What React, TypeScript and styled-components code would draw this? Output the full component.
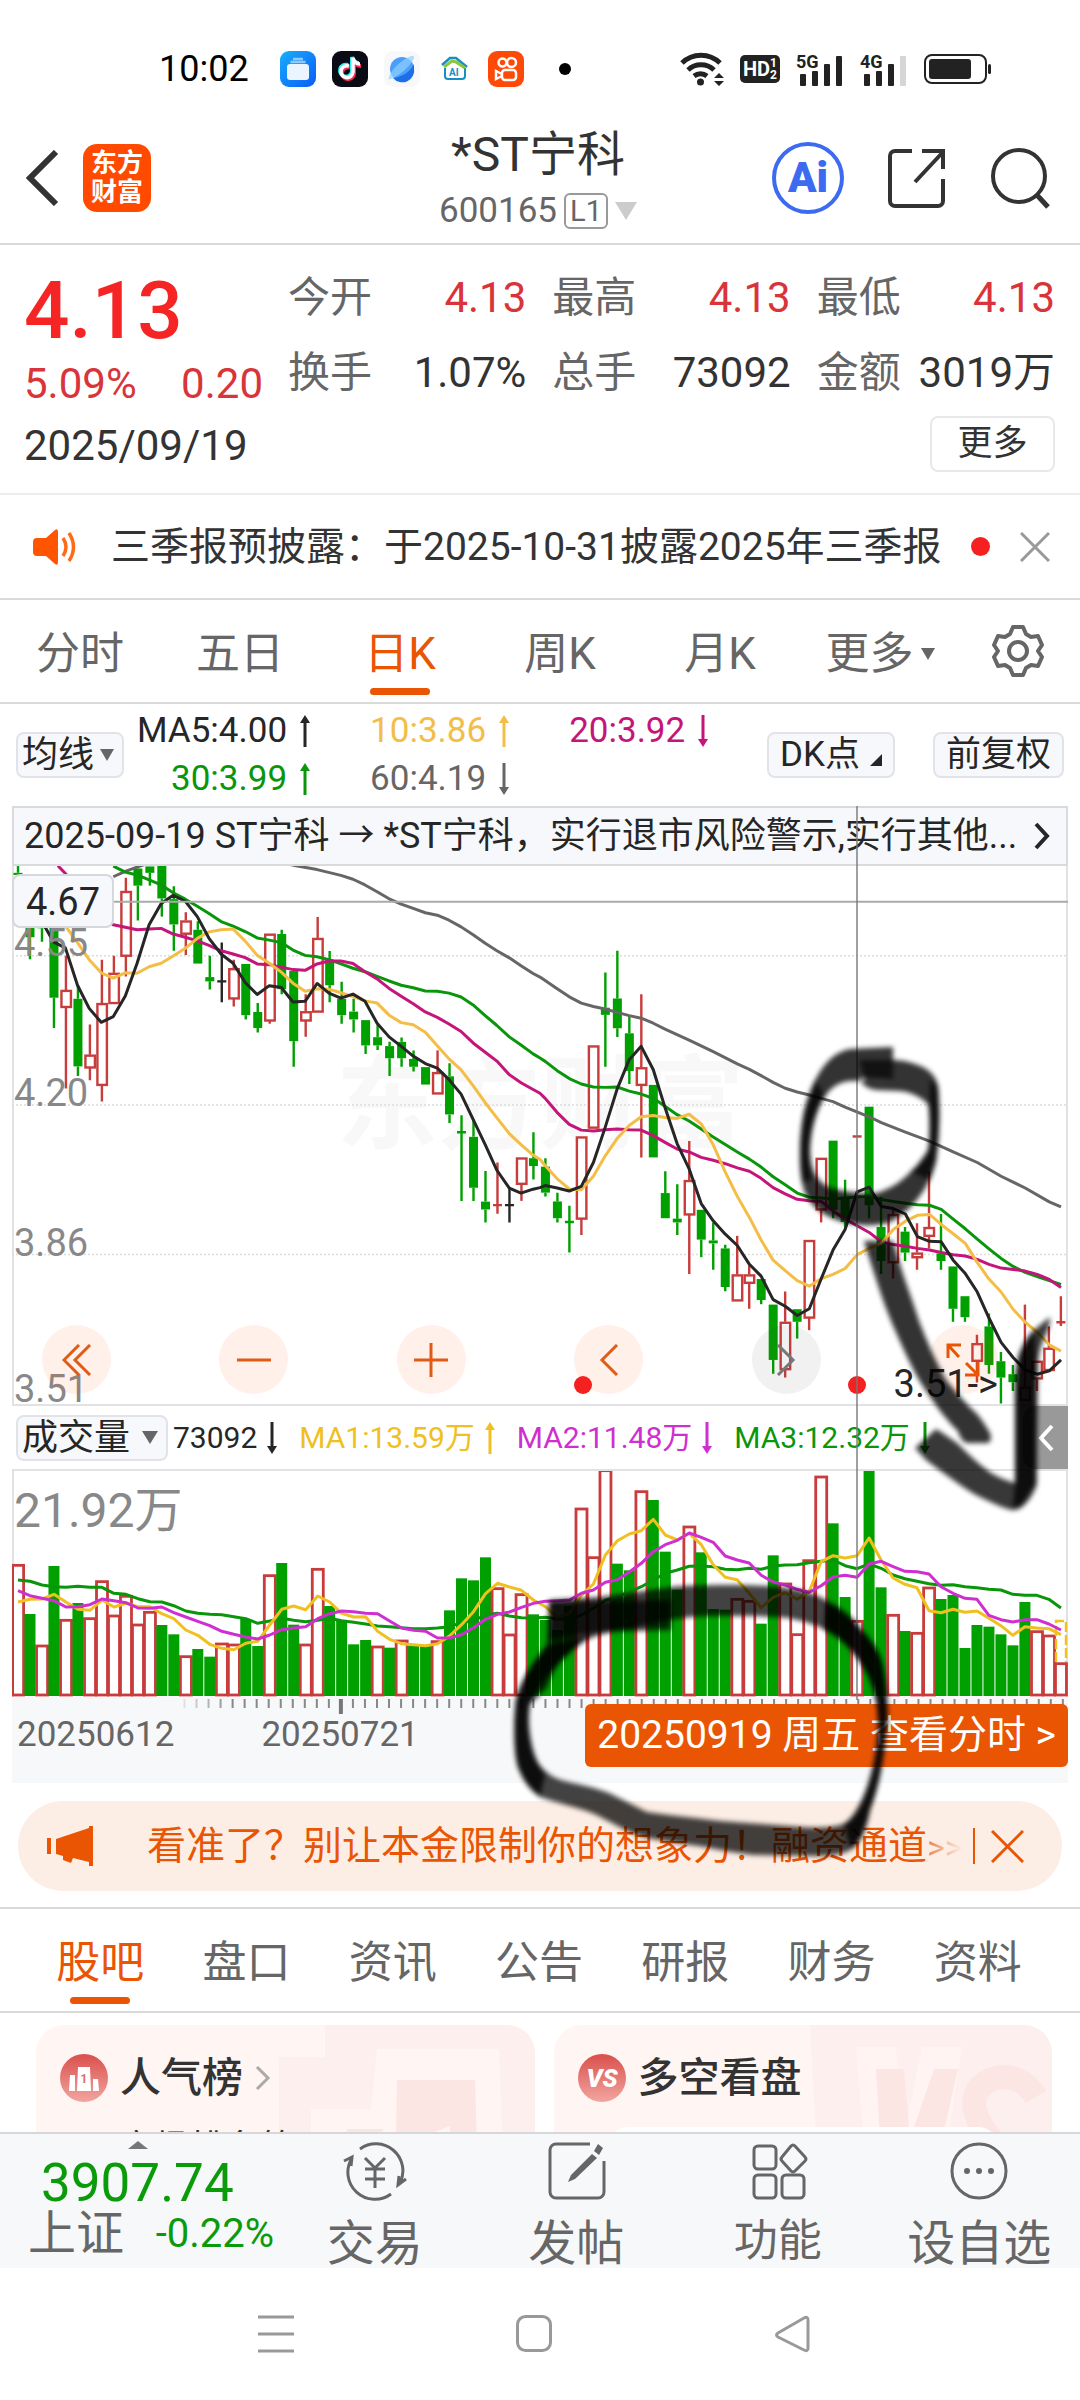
import React from "react";
import styled, { createGlobalStyle } from "styled-components";

const ORANGE = "#ea5504";
const GREEN = "#00a000";
const RED = "#c83c3c";

const GlobalStyle = createGlobalStyle`
  * { box-sizing: border-box; }
  body { margin: 0; background: #fff; }
  body, button, select {
    font-family: Roboto, "Noto Sans CJK SC", sans-serif;
    color: #333;
  }
  button, select {
    margin: 0; padding: 0; border: 0; background: none;
    font-weight: 400; cursor: pointer; appearance: none;
  }
  svg { display: block; flex: none; }
`;

/* ---------- chart data ---------- */

type Candle = { kind: string; top: number; bottom: number; high: number; low: number };
type Point = [number, number];

const STEP = 11.987;
const slotX = (i: number) => 6 + i * STEP;

const parseCandles = (text: string, scale: number): Candle[] =>
  text.trim().split(",").map((row) => {
    const [kind, ...n] = row.trim().split(" ");
    const [top, bottom, high, low] = n.map((v) => Number(v) / scale - 16);
    return { kind, top, bottom, high, low };
  });

const parseLine = (text: string, left: number, scale: number): Point[] =>
  text.trim().split(";").map((pair) => {
    const [x, y] = pair.split(",").map(Number);
    return [x / 2.904 + left, y / scale - 16];
  });

const CANDLES: Candle[] = [
  ...parseCandles(
    `g 64 70 44 100,g 200 245 120 307,g 150 220 120 258,g 200 415 190 500,r 393 441 297 670,
    g 418 608 380 635,r 575 611 490 647,r 430 660 308 707,r 345 430 297 430,r 115 297 78 355,
    g 52 100 46 198,g 46 64 46 100,g 44 136 44 187,g 138 209 102 283,r 198 235 175 295,
    g 224 319 200 319,g 357 369 297 392,k 369 369 260 428,r 332 417 308 440,g 320 464 320 476,
    g 455 500 430 513,r 235 479 235 488,g 236 391 224 405,g 340 537 340 609,r 453 479 405 525,
    r 247 454 188 454,g 308 380 284 428,g 418 464 370 488,g 454 476 418 513,g 478 549 478 573,
    g 526 549 490 562,g 551 585 539 635,g 539 585 527 609,g 587 609 563 622,g 610 659 610 659,
    r 624 684 563 684,g 636 743 599 767,g 793 793 745 986,g 806 949 757 986,g 988 1010 902 1047,
    r 998 998 878 1022,k 998 998 950 1047,r 864 938 864 986,g 866 888 793 926`,
    2.8
  ),
  ...parseCandles(
    `g 755 817 735 826,g 838 878 817 888,g 887 887 848 960,r 683 879 683 918,r 466 662 466 662,
    g 376 393 292 517,g 354 425 240 446,g 437 527 397 558,r 518 560 344 733,g 560 733 560 733,
    g 818 878 766 878,g 879 888 797 918,r 787 869 694 1011,g 858 929 858 971,g 931 938 888 1001,
    g 950 1042 941 1052,r 1012 1074 920 1074,r 1012 1032 990 1094,g 1023 1073 1023 1083,g 1084 1216 1084 1249,
    r 1125 1238 1053 1258,g 1095 1125 1095 1165,r 930 1115 930 1145,r 734 857 734 888,g 693 858 693 878,
    g 827 887 786 900,r 683 683 683 683,g 612 847 612 878,g 899 980 827 1011,r 868 983 858 1022,
    g 910 960 899 980,r 960 971 890 1001,r 899 920 766 950,g 962 980 868 1001,g 993 1094 993 1125,
    g 1064 1114 1064 1125,r 1176 1218 1156 1270,g 1136 1228 1105 1249,g 1219 1258 1197 1320,g 1250 1269 1228 1290,
    r 1280 1311 1084 1311,r 1218 1260 1218 1290,r 1187 1240 1136 1240,r 1126 1126 1064 1135`,
    2.376
  ),
];

const both = (a: string, b: string) => [...parseLine(a, -12, 2.8), ...parseLine(b, 528, 2.376)];

const PRICE_LINES: { color: string; points: Point[] }[] = [
  {
    color: "#666",
    points: both(
      "329,75;364,60;398,48;433,36;500,20;760,20;820,36;860,44;921,55;990,71;1025,82;1060,98;1095,117;1130,137;1165,152;1200,164;1235,176;1270,183;1304,197;1339,216;1374,238;1409,262;1443,283;1479,303;1513,325;1548,347",
      "0,303;50,331;85,350;120,365;155,373;189,379;224,387;259,395;294,401;329,413;363,427;433,453;503,481;573,510;608,523;642,538;677,554;712,568;747,577;782,584;817,592;851,600;886,613;956,636;991,650;1061,673;1131,694;1200,720;1270,745;1339,778;1409,806;1479,839;1513,851"
    ),
  },
  {
    color: "#0a960a",
    points: both(
      "329,45;364,62;398,70;433,84;468,98;503,120;538,138;573,158;607,178;642,201;677,214;712,229;747,247;782,253;817,260;851,281;886,296;921,300;955,308;990,320;1025,332;1060,342;1095,355;1130,368;1165,380;1200,387;1235,396;1270,397;1304,402;1339,413;1374,435;1409,465;1443,493;1479,525;1513,548;1548,573",
      "0,496;15,504;50,526;85,545;120,558;155,565;189,566;224,565;259,575;294,582;329,592;363,611;398,631;433,646;468,665;503,684;538,702;573,720;608,737;642,756;677,779;712,798;747,818;782,828;817,830;851,832;886,830;921,827;956,826;991,833;1026,838;1061,842;1096,846;1131,847;1165,857;1200,880;1235,903;1270,928;1304,951;1339,974;1374,993;1409,1007;1444,1017;1479,1027;1513,1036"
    ),
  },
  {
    color: "#c3157a",
    points: both(
      "168,44;192,68;225,120;260,170;294,196;329,210;364,217;398,224;433,222;468,220;503,236;538,245;573,255;607,268;642,283;677,292;712,302;747,320;782,322;817,329;851,336;886,338;921,320;955,312;990,312;1025,319;1060,342;1095,362;1130,389;1165,411;1200,432;1235,455;1270,470;1304,489;1339,510;1374,542;1409,568;1443,593;1479,631;1513,654;1548,673",
      "0,580;15,592;50,626;85,654;120,668;155,670;189,667;224,665;259,667;294,668;329,681;363,697;398,713;433,720;468,733;503,740;538,748;573,758;608,766;642,783;677,805;712,820;747,833;782,836;817,838;851,860;886,880;921,896;956,912;991,934;1026,941;1061,945;1096,950;1131,954;1165,960;1200,965;1235,968;1270,976;1304,988;1339,997;1374,1000;1409,1004;1444,1012;1479,1024;1513,1043"
    ),
  },
  {
    color: "#f4bd46",
    points: both(
      "160,170;195,220;225,260;259,308;294,345;329,360;364,345;398,346;433,328;468,318;503,298;538,276;573,248;607,230;642,224;677,222;712,256;747,296;782,318;817,343;851,374;886,397;921,390;955,391;990,401;1025,412;1060,424;1095,430;1130,464;1165,485;1200,491;1235,512;1270,550;1304,587;1339,618;1374,662;1409,710;1443,753;1479,797;1513,828;1548,857",
      "0,738;15,752;50,784;85,808;120,810;155,778;189,730;224,688;259,657;294,636;329,633;363,638;398,640;433,630;468,653;503,703;538,768;573,826;608,876;642,930;677,978;712,1003;747,1027;782,1040;817,1022;851,1012;886,998;921,965;956,950;991,938;1026,905;1061,885;1096,871;1131,869;1165,893;1200,915;1235,938;1270,984;1304,1023;1339,1054;1374,1095;1409,1126;1444,1150;1479,1180;1513,1195"
    ),
  },
  {
    color: "#262626",
    points: both(
      "100,170;130,215;155,258;190,275;225,380;259,445;294,484;329,468;364,410;398,318;433,210;468,150;503,127;538,144;573,187;607,248;642,292;677,318;712,372;747,406;782,381;817,386;851,427;886,425;921,375;955,402;990,416;1025,405;1060,425;1095,487;1130,525;1165,552;1200,579;1235,600;1270,613;1304,645;1339,686;1374,757;1409,828;1443,900;1479,950;1513,964;1548,953",
      "0,805;15,800;50,806;85,813;120,802;155,745;189,662;224,570;259,500;294,468;329,524;363,614;398,700;433,760;468,843;503,884;538,916;573,943;608,988;642,1016;677,1072;712,1088;747,1110;782,1094;817,1022;851,954;886,905;921,815;956,804;991,850;1026,855;1061,868;1096,922;1131,933;1165,934;1200,978;1235,1010;1270,1054;1304,1116;1339,1174;1374,1210;1409,1240;1444,1250;1479,1242;1513,1216"
    ),
  },
];

const VOLUMES =
  "r493 g642 r735 g498 r658 g609 r653 r542 r645 r586 r672 r634 g675 g703 r767 g747 g770 r729 r732 g657 g738 r524 g489 g674 r732 r505 g618 g660 g733 g720 r738 g743 r720 g737 g737 r722 g631 g535 g541 g472 r563 r702 r581 g643 g660 g690 g618 r324 r470 r209 g491 g511 r272 g300 g455 g569 r378 g457 g627 g629 r595 r601 g671 g466 r549 r701 r479 r228 g370 g591 r661 g208 g562 r643 g693 r697 r561 g597 g585 g744 g675 g680 g703 g736 g606 r692 r705 r788"
    .split(" ")
    .map((s) => ({ kind: s[0], top: Number(s.slice(1)) / 3 - 69 }));

const VOLUME_LINES = [
  {
    color: "#0a960a",
    values:
      "540 544 555 560 562 559 562 562 580 583 596 605 606 617 633 640 643 644 650 656 670 663 655 661 665 661 655 662 667 672 678 680 683 686 686 684 680 668 662 645 640 648 653 654 652 657 658 645 625 601 590 575 560 540 520 510 499 498 500 508 509 505 508 498 495 494 488 484 480 497 506 492 505 525 536 544 551 556 554 560 563 568 570 583 586 586 598 624",
  },
  {
    color: "#f0c020",
    values:
      "606 598 597 583 606 628 631 600 621 610 620 620 641 656 690 706 733 745 749 730 724 675 628 618 629 588 606 640 651 650 694 718 731 734 737 731 708 674 635 581 550 561 571 600 620 653 640 585 552 465 422 402 392 358 405 420 400 434 494 532 539 580 623 592 578 598 575 485 467 474 467 414 480 534 553 563 632 638 628 637 633 655 677 706 680 684 686 704",
  },
  {
    color: "#cf2fd0",
    values:
      "572 587 595 602 621 620 614 597 602 608 624 625 621 638 651 664 677 694 703 711 717 705 689 684 680 656 641 633 635 640 641 663 684 691 694 714 714 704 683 658 643 636 622 610 604 602 600 580 570 547 539 516 490 455 434 421 399 412 427 468 480 489 526 546 555 568 577 557 531 526 532 492 484 500 514 515 522 560 580 595 598 646 659 666 659 659 672 690",
  },
].map((l) => ({
  color: l.color,
  points: l.values.split(" ").map((v, i): Point => [slotX(i), Number(v) / 3 - 69]),
}));

const toPoints = (pts: Point[]) => pts.map(([x, y]) => `${x.toFixed(1)},${y.toFixed(1)}`).join(" ");

/* ---------- layout ---------- */

const Screen = styled.div`
  position: relative;
  display: flex;
  flex-direction: column;
  height: 100vh;
  min-height: 2340px;
  overflow: hidden;
  background: #fff;
`;

const StatusBar = styled.div`
  display: flex;
  align-items: center;
  height: 110px;
  padding: 28px 88px 0 159px;
  font-size: 36px;
  line-height: 40px;
  color: #000;
`;
const AppIcons = styled.div`
  display: flex;
  align-items: center;
  gap: 16px;
  margin-left: 31px;
`;
const SystemIcons = styled.div`
  display: flex;
  align-items: center;
  gap: 16px;
  margin-left: auto;
`;
const HdBadge = styled.span`
  display: flex;
  align-items: center;
  justify-content: center;
  width: 40px;
  height: 28px;
  border-radius: 5px;
  background: #222;
  color: #fff;
  font-size: 20px;
  font-weight: 700;
  line-height: 24px;
`;
const HdDigits = styled.span`
  display: grid;
  font-size: 12px;
  line-height: 12px;
`;

const Header = styled.header`
  display: grid;
  grid-template-columns: 1fr auto 1fr;
  align-items: center;
  height: 135px;
  padding: 2px 30px 0 26px;
  border-bottom: 2px solid #d9d9d9;
`;
const HeaderSide = styled.div<{ $end?: boolean }>`
  display: flex;
  align-items: center;
  gap: ${(p) => (p.$end ? 42 : 24)}px;
  justify-content: ${(p) => (p.$end ? "flex-end" : "flex-start")};
`;
const IconButton = styled.button`
  display: flex;
  align-items: center;
  justify-content: center;
`;
const GearButton = styled(IconButton)`
  margin-left: 31px;
`;
const BrandLogo = styled.a`
  display: grid;
  place-content: center;
  width: 68px;
  height: 68px;
  border-radius: 14px;
  background: #ff4a00;
  color: #fff;
  font-size: 26px;
  font-weight: 700;
  line-height: 29px;
  text-decoration: none;
`;
const AiButton = styled.button`
  width: 72px;
  height: 72px;
  border: 4px solid #3c6af0;
  border-radius: 50%;
  color: #3c6af0;
  font-size: 42px;
  font-weight: 900;
  line-height: 60px;
`;
const Title = styled.h1`
  margin: 0;
  font-size: 48px;
  font-weight: 400;
  line-height: 58px;
  text-align: center;
`;
const Code = styled.div`
  display: flex;
  align-items: center;
  gap: 7px;
  margin-top: 8px;
  font-size: 35px;
  line-height: 38px;
  color: #666;
`;
const Level = styled.span`
  padding: 0 4px;
  border: 2px solid #999;
  border-radius: 6px;
  font-size: 29px;
  line-height: 32px;
`;
const Caret = styled.span<{ $w?: number; $color?: string }>`
  width: 0;
  height: 0;
  border: ${(p) => (p.$w ?? 14) / 2}px solid transparent;
  border-top: ${(p) => ((p.$w ?? 14) * 6) / 7}px solid ${(p) => p.$color ?? "#666"};
  border-bottom: 0;
`;

const Quote = styled.section`
  padding: 26px 25px 21px 24px;
  border-bottom: 2px solid #ececec;
  font-size: 42px;
  line-height: 50px;
`;
const QuoteTop = styled.div`
  display: flex;
  gap: 25px;
`;
const PriceBlock = styled.div`
  width: 239px;
  color: #d9343a;
`;
const Price = styled.div`
  font-size: 80px;
  font-weight: 500;
  line-height: 80px;
  color: #f52525;
`;
const Change = styled.div`
  display: flex;
  justify-content: space-between;
  padding-top: 8px;
  line-height: 50px;
`;
const Stats = styled.dl`
  flex: 1;
  display: grid;
  grid-template-columns: repeat(3, 1fr);
  align-content: start;
  gap: 25px 26px;
  margin: 0;
  padding-top: 2px;
`;
const Stat = styled.div`
  display: flex;
  justify-content: space-between;
`;
const StatName = styled.dt`
  color: #666;
`;
const StatValue = styled.dd<{ $up?: boolean }>`
  margin: 0;
  color: ${(p) => (p.$up ? "#d9343a" : "#333")};
`;
const QuoteBottom = styled.div`
  display: flex;
  align-items: center;
  justify-content: space-between;
  margin-top: 7px;
`;
const QuoteDate = styled.span`
  padding-top: 3px;
`;
const MoreButton = styled.button`
  width: 125px;
  height: 56px;
  border: 2px solid #e8e8ea;
  border-radius: 8px;
  font-size: 35px;
  line-height: 50px;
`;

const News = styled.section`
  display: flex;
  align-items: center;
  height: 105px;
  padding: 0 30px 0 33px;
  border-bottom: 2px solid #d9d9d9;
`;
const NewsText = styled.a`
  flex: 1;
  margin-left: 33px;
  font-size: 39px;
  line-height: 50px;
  color: #333;
  text-decoration: none;
  white-space: nowrap;
`;
const Dot = styled.span`
  width: 19px;
  height: 19px;
  margin-right: 30px;
  border-radius: 50%;
  background: #f52020;
`;

const Tabs = styled.nav<{ $pad: string; $height: number }>`
  display: flex;
  flex: none;
  align-items: stretch;
  height: ${(p) => p.$height}px;
  padding: ${(p) => p.$pad};
  border-bottom: 2px solid #d9d9d9;
`;
const Tab = styled.button<{ $active?: boolean }>`
  position: relative;
  display: flex;
  flex: 1 1 0;
  align-items: center;
  justify-content: center;
  gap: 7px;
  padding-top: 5px;
  font-size: 44px;
  line-height: 60px;
  white-space: nowrap;
  color: ${(p) => (p.$active ? ORANGE : "#666")};
  &::after {
    content: "";
    position: absolute;
    bottom: 7px;
    width: 60px;
    height: 7px;
    border-radius: 4px;
    background: ${(p) => (p.$active ? ORANGE : "transparent")};
  }
`;

const MaBar = styled.section`
  display: flex;
  align-items: center;
  height: 102px;
  padding: 0 16px;
`;
const Picker = styled.label<{ $w: number }>`
  display: flex;
  flex: none;
  align-items: center;
  justify-content: space-between;
  width: ${(p) => p.$w}px;
  height: 46px;
  padding: 0 8px 0 4px;
  border: 2px solid #e1e3e8;
  border-radius: 8px;
  background: #f7f8fb;
`;
const PickerSelect = styled.select`
  font-size: 36px;
  line-height: 42px;
  height: 42px;
  color: #262626;
`;
const ChipButton = styled.button`
  height: 46px;
  padding: 0 11px;
  border: 2px solid #e1e3e8;
  border-radius: 8px;
  background: #f7f8fb;
  font-size: 35px;
  line-height: 40px;
  color: #262626;
`;
const Corner = styled.span`
  display: inline-block;
  margin-left: 10px;
  border-left: 12px solid transparent;
  border-bottom: 12px solid #262626;
`;
const Chips = styled.div`
  display: flex;
  gap: 38px;
  margin-left: auto;
`;
const MaGrid = styled.div`
  display: grid;
  grid-template-columns: repeat(3, auto);
  justify-items: end;
  column-gap: 60px;
  margin-left: 13px;
  font-size: 35px;
  line-height: 48px;
`;
const Reading = styled.span<{ $color: string; $gap?: number }>`
  display: flex;
  align-items: center;
  gap: ${(p) => p.$gap ?? 13}px;
  color: ${(p) => p.$color};
`;

const ChartArea = styled.section`
  position: relative;
  margin: 0 12px;
`;
const CrossLine = styled.div`
  position: absolute;
  top: 0;
  bottom: 83px;
  left: 80%;
  width: 2px;
  margin-left: -1px;
  background: rgba(120, 120, 120, 0.7);
`;
const EventRow = styled.a`
  display: flex;
  align-items: center;
  justify-content: space-between;
  height: 60px;
  padding: 0 16px 0 10px;
  border: 2px solid #d8dade;
  background: #f6f8fb;
  color: #262626;
  font-size: 36px;
  line-height: 50px;
  text-decoration: none;
  white-space: nowrap;
`;
const PricePane = styled.div`
  position: relative;
  height: 540px;
  border: solid #e2e2e4;
  border-width: 0 2px 2px;
`;
const Plot = styled.svg`
  position: absolute;
  top: 0;
  left: -2px;
  width: calc(100% + 4px);
  height: 100%;
`;
const Watermark = styled.div`
  position: absolute;
  inset: 180px 0 auto;
  text-align: center;
  font-size: 102px;
  font-weight: 700;
  line-height: 120px;
  color: #f8f8f8;
`;
const AxisLabel = styled.span<{ $y: number }>`
  position: absolute;
  left: 0;
  top: ${(p) => p.$y}px;
  font-size: 38px;
  line-height: 40px;
  color: #888;
`;
const CursorLabel = styled.span`
  position: absolute;
  left: -2px;
  top: 8px;
  width: 102px;
  height: 54px;
  border: 2px solid #d5d8dc;
  border-radius: 8px;
  background: #f6f8fb;
  font-size: 38px;
  line-height: 52px;
  text-align: center;
  color: #262626;
`;
const LowLabel = styled.span`
  position: absolute;
  right: 68px;
  bottom: 0;
  font-size: 38px;
  line-height: 40px;
  color: #262626;
`;
const PaneControls = styled.div`
  position: absolute;
  right: 68px;
  bottom: 10px;
  left: 28px;
  display: flex;
  justify-content: space-between;
`;
const RoundButton = styled.button<{ $muted?: boolean }>`
  display: flex;
  align-items: center;
  justify-content: center;
  width: 69px;
  height: 69px;
  border-radius: 50%;
  background: ${(p) => (p.$muted ? "rgba(80,80,80,.08)" : "rgba(250,90,20,.09)")};
`;
const Marker = styled.span<{ $x: number }>`
  position: absolute;
  left: ${(p) => p.$x}%;
  bottom: 10px;
  width: 18px;
  height: 18px;
  margin-left: -8px;
  border-radius: 50%;
  background: #f52020;
`;
const VolumeBar = styled.div`
  display: flex;
  align-items: center;
  height: 63px;
  padding-left: 4px;
  font-size: 30px;
  line-height: 40px;
  white-space: nowrap;
`;
const VolumeReadings = styled.div`
  display: flex;
  gap: 22px;
  margin-left: 5px;
`;
const DrawerButton = styled.button`
  display: flex;
  align-items: center;
  justify-content: center;
  width: 45px;
  height: 63px;
  margin-left: auto;
  border-radius: 12px 0 0 12px;
  background: #999;
`;
const VolumePane = styled.div`
  position: relative;
  height: 228px;
  border: solid #e2e2e4;
  border-width: 2px 2px 0;
`;
const VolumeMax = styled.span`
  position: absolute;
  left: 0;
  top: 13px;
  font-size: 48px;
  line-height: 54px;
  color: #888;
`;
const TimeAxis = styled.div`
  position: relative;
  height: 86px;
  background: #f7f8fa;
  font-size: 35px;
  line-height: 40px;
  color: #666;
`;
const Dates = styled.div`
  display: flex;
  gap: 87px;
  padding: 18px 5px;
`;
const DateButton = styled.button`
  position: absolute;
  top: 7px;
  right: 0;
  height: 63px;
  padding: 0 12px;
  border-radius: 6px;
  background: ${ORANGE};
  color: #fff;
  font-size: 39px;
  line-height: 63px;
  white-space: nowrap;
`;

const Promo = styled.aside`
  display: flex;
  flex: none;
  align-items: center;
  height: 90px;
  margin: 18px 18px 16px;
  padding: 0 38px 0 29px;
  border-radius: 45px;
  background: #fceee5;
  color: ${ORANGE};
  font-size: 39px;
  line-height: 50px;
  white-space: nowrap;
`;
const PromoText = styled.a`
  flex: 1;
  margin-left: 53px;
  color: inherit;
  text-decoration: none;
`;
const Fade = styled.span`
  font-size: 34px;
  background: linear-gradient(90deg, #e9854c, #fceee5);
  background-clip: text;
  color: transparent;
`;
const Divider = styled.span`
  width: 2px;
  height: 36px;
  margin-right: 16px;
  background: ${ORANGE};
`;

const Rule = styled.hr`
  flex: none;
  width: 100%;
  height: 2px;
  margin: 0;
  border: 0;
  background: #d9d9d9;
`;

const Cards = styled.section`
  display: grid;
  flex: 1 1 0;
  grid-template-columns: 1fr 1fr;
  gap: 19px;
  min-height: 0;
  padding: 12px 28px 0 36px;
  overflow: hidden;
`;
const Card = styled.article`
  position: relative;
  height: 220px;
  padding: 24px 24px;
  border-radius: 28px;
  background: #fff5f3;
  overflow: hidden;
`;
const CardArt = styled.svg`
  position: absolute;
  top: 0;
  right: 0;
`;
const CardHead = styled.h2`
  position: relative;
  display: flex;
  align-items: center;
  gap: 12px;
  margin: 0;
  font-size: 41px;
  font-weight: 500;
  line-height: 58px;
`;
const CardNote = styled.p`
  position: relative;
  margin: 17px 0 0 60px;
  font-size: 35px;
  line-height: 50px;
`;
const CardPanel = styled.div`
  position: relative;
  height: 80px;
  margin: 20px 30px 0;
  border: 5px solid #fff;
  border-radius: 20px;
`;

const BottomBar = styled.footer`
  display: flex;
  flex: none;
  height: 136px;
  border-top: 2px solid #d5d7da;
  background: #f6f8fa;
`;
const IndexBlock = styled.div`
  width: 274px;
  padding: 7px 0 0 28px;
  color: #0a9a0a;
`;
const UpTick = styled.span`
  display: block;
  width: 0;
  margin-left: 100px;
  border: 10px solid transparent;
  border-top: 0;
  border-bottom: 8px solid #777;
`;
const IndexValue = styled.div`
  padding: 7px 0 0 13px;
  font-size: 53px;
  line-height: 54px;
`;
const IndexRow = styled.div`
  display: flex;
  align-items: center;
  justify-content: space-between;
  font-size: 40px;
  line-height: 48px;
`;
const IndexName = styled.span`
  font-size: 48px;
  color: #666;
`;
const Actions = styled.div`
  display: flex;
  flex: 1;
`;
const Action = styled.button<{ $small?: boolean }>`
  display: flex;
  flex: 1;
  flex-direction: column;
  align-items: center;
  justify-content: flex-start;
  gap: 7px;
  padding-top: 7px;
  font-size: ${(p) => (p.$small ? 44 : 48)}px;
  line-height: ${(p) => (p.$small ? 66 : 72)}px;
  white-space: nowrap;
  color: #666;
`;
const SystemNav = styled.nav`
  display: flex;
  flex: none;
  align-items: center;
  justify-content: center;
  gap: 222px;
  height: 132px;
  padding-right: 12px;
`;

const InkLayer = styled.svg`
  position: absolute;
  top: 0;
  left: 0;
  pointer-events: none;
`;

/* ---------- small pieces ---------- */

const Arrow = ({ down }: { down?: boolean }) => (
  <svg width="10" height="32" viewBox="0 0 10 32" fill="currentColor">
    {down ? <path d="M3.500 0h3v24h3.500L5 32 0 24h3.500z" /> : <path d="M3.500 32h3V8h3.500L5 0 0 8h3.500z" />}
  </svg>
);

const Stroke = ({
  size, d, color, width = 4, box,
}: { size: [number, number]; d: string; color: string; width?: number; box?: string }) => (
  <svg width={size[0]} height={size[1]} viewBox={box ?? `0 0 ${size[0]} ${size[1]}`} fill="none" stroke={color} strokeWidth={width}>
    <path d={d} />
  </svg>
);

const Signal = ({ label, weak }: { label: string; weak?: boolean }) => (
  <svg width="48" height="40" viewBox="0 -4 48 40" fill="#222">
    <text x="0" y="15" fontSize="18" fontWeight="700">{label}</text>
    <rect x="4" y="21" width="6" height="12" rx="1" />
    <rect x="16" y="18" width="6" height="15" rx="1" />
    <rect x="28" y="11" width="6" height="22" rx="1" />
    <rect x="40" y="3" width="6" height="30" rx="1" fill={weak ? "#d6d6d6" : "#222"} />
  </svg>
);

const fill = (kind: string) => (kind === "g" ? GREEN : kind === "r" ? RED : "#262626");

const CandleShape = ({ c, i }: { c: Candle; i: number }) => {
  const x = slotX(i);
  const color = fill(c.kind);
  if (c.top === c.bottom)
    return (
      <g stroke={color} strokeWidth="2.4">
        <path d={`M${x} ${c.high}V${c.low}M${x - 4.5} ${c.top}h9`} />
      </g>
    );
  return (
    <g stroke={color} strokeWidth="2.4">
      <path d={`M${x} ${c.high}V${c.top}M${x} ${c.bottom}V${c.low}`} />
      {c.kind === "g" ? (
        <rect x={x - 4.5} y={c.top} width="9" height={c.bottom - c.top} fill={color} stroke="none" />
      ) : (
        <rect x={x - 4.5} y={c.top + 1} width="9.5" height={Math.max(1, c.bottom - c.top - 1)} fill="#fff" />
      )}
    </g>
  );
};

const PriceChart = () => (
  <Plot viewBox="0 0 1056 540" preserveAspectRatio="none">
    <g stroke="#dcdcdc" strokeWidth="1.5" strokeDasharray="2 2">
      <path d="M0 90H1056M0 240H1056M0 390H1056" />
    </g>
    {CANDLES.map((c, i) => <CandleShape key={i} c={c} i={i} />)}
    <g fill="none" strokeWidth="3" strokeLinejoin="round">
      {PRICE_LINES.map((l) => <polyline key={l.color} points={toPoints(l.points)} stroke={l.color} />)}
    </g>
    <path d="M0 36H1056" stroke="#aaa" strokeWidth="2" />
  </Plot>
);

const VolumeChart = () => (
  <Plot viewBox="0 2 1056 226" preserveAspectRatio="none">
    {VOLUMES.map((v, i) => {
      const x = slotX(i);
      return v.kind === "g" ? (
        <rect key={i} x={x - 5.5} y={v.top} width="11" height={227 - v.top} fill={GREEN} />
      ) : (
        <rect key={i} x={x - 5.4} y={v.top + 1} width="11" height={225 - v.top} fill="#fff" stroke={RED} strokeWidth="2.8" />
      );
    })}
    <path d="M1044 193V152H1054V193" fill="none" stroke="#f0c020" strokeWidth="2.4" strokeDasharray="10 3" />
    <g fill="none" strokeWidth="3" strokeLinejoin="round">
      {VOLUME_LINES.map((l) => <polyline key={l.color} points={toPoints(l.points)} stroke={l.color} />)}
    </g>
  </Plot>
);

const Ticks = () => (
  <Plot viewBox="0 0 1056 86" preserveAspectRatio="none" stroke="#888" strokeWidth="2">
    {Array.from({ length: 74 }, (_, k) => {
      const i = k + 14;
      return <path key={i} d={`M${slotX(i)} 2v9`} opacity={Math.min(1, 0.2 + k * 0.2)} />;
    })}
    <path d={`M${slotX(27)} 2v15`} strokeWidth="4" stroke="#777" />
  </Plot>
);

const Ink = () => (
  <InkLayer width="1080" height="2400" viewBox="0 0 1080 2400" aria-hidden="true">
    <defs>
      <filter id="soft" x="-10%" y="-10%" width="120%" height="120%">
        <feGaussianBlur stdDeviation="2.5" />
      </filter>
    </defs>
    <g filter="url(#soft)" fill="#000">
      <path
        fillRule="evenodd"
        fillOpacity=".8"
        d="M893 1047C878 1048 864 1048 850 1049C826 1053 811 1082 804 1112C799 1136 799 1164 802 1182C806 1206 825 1217 843 1222C858 1226 876 1226 888 1223C914 1210 930 1186 936 1161C940 1132 940 1108 938 1086C936 1074 926 1067 912 1063C906 1061 899 1060 893 1060Z
           M891 1080L850 1081C838 1082 830 1088 824 1098C814 1114 809 1134 810 1153C811 1172 818 1182 829 1187C842 1192 862 1194 877 1193C892 1188 904 1180 912 1170C920 1164 926 1158 928 1149C931 1132 930 1118 928 1104C920 1096 910 1092 900 1091L876 1090C866 1088 861 1084 860 1078Z"
      />
      <path fillOpacity=".65" d="M859 1060L893 1060V1079L866 1082Z" />
      <path fillOpacity=".7" d="M936 1161C940 1132 940 1108 938 1086L930 1080L929 1149L912 1172L930 1180Z" />
      <path fillOpacity=".7" d="M804 1112C799 1136 799 1164 802 1182L812 1180C808 1160 808 1130 824 1095L815 1080Z" />
      <path
        fillRule="evenodd"
        fillOpacity=".74"
        d="M549 1600L600 1597L671 1587C690 1585 745 1584 781 1587C800 1589 815 1594 826 1600C842 1608 852 1616 860 1627C872 1640 879 1650 883 1665C888 1690 889 1720 886 1735C883 1765 878 1790 870 1810C866 1830 860 1845 850 1850C842 1855 828 1856 815 1856L753 1855C736 1853 720 1850 705 1847C684 1844 662 1841 643 1837C626 1832 608 1820 592 1813C574 1806 556 1803 540 1797C524 1786 517 1770 515 1750C514 1732 514 1716 516 1700C520 1684 528 1668 547 1645Z
           M547 1688C552 1672 560 1661 568 1654C578 1643 590 1636 616 1631L671 1620C690 1616 708 1616 726 1616C750 1616 770 1616 788 1618C804 1621 816 1625 826 1630C840 1638 846 1644 852 1652C864 1664 872 1680 876 1700C880 1720 878 1740 876 1760C872 1778 868 1790 864 1800C858 1814 852 1821 843 1824C832 1828 814 1828 802 1827L747 1823C728 1822 712 1820 695 1818C676 1816 660 1814 647 1812C634 1806 622 1799 609 1793C594 1787 576 1784 561 1780C548 1776 538 1766 532 1752C528 1738 526 1718 530 1704Z"
      />
      <path fillOpacity=".75" d="M549 1602L671 1600V1630L600 1632L549 1640Z" />
      <path fillOpacity=".8" d="M826 1602C842 1608 866 1634 879 1653C888 1680 889 1720 886 1735C883 1765 878 1790 870 1810C866 1830 860 1845 850 1848L844 1824C862 1812 874 1770 877 1740C880 1710 876 1680 852 1652C844 1642 834 1634 824 1630Z" />
      <path fillOpacity=".8" d="M547 1645C528 1668 520 1684 516 1700C514 1716 513 1750 518 1768C524 1780 530 1790 540 1796L545 1774C534 1762 526 1730 530 1704C540 1680 560 1660 590 1636Z" />
      <path
        fillOpacity=".8"
        d="M864 1241C868 1254 872 1267 876 1279C882 1298 888 1314 895 1330C903 1348 910 1364 919 1380C932 1400 944 1418 958 1431C960 1438 963 1442 967 1443H988C992 1440 991 1438 990 1433C986 1426 982 1420 977 1414C966 1404 956 1392 946 1380C936 1362 927 1342 919 1321C913 1302 907 1286 902 1271L893 1241Z"
      />
      <path
        fillOpacity=".78"
        d="M915 1448L936 1429C944 1434 950 1438 957 1443C968 1454 980 1465 991 1473C1000 1478 1008 1481 1015 1483V1397C1015 1380 1016 1366 1019 1355C1023 1344 1028 1336 1034 1330L1050 1317C1050 1324 1048 1330 1046 1334C1041 1344 1039 1352 1038 1363L1037 1439V1484C1034 1494 1028 1502 1022 1507C1018 1510 1015 1510 1011 1510C998 1506 986 1500 974 1494C958 1484 942 1472 926 1460Z"
      />
      <path fillOpacity=".75" d="M1015 1483V1397C1015 1380 1016 1366 1019 1355C1023 1344 1028 1336 1034 1330L1036 1360L1035 1484L1022 1505L1013 1508Z" />
    </g>
  </InkLayer>
);

const STATS: [string, string, boolean][] = [
  ["今开", "4.13", true], ["最高", "4.13", true], ["最低", "4.13", true],
  ["换手", "1.07%", false], ["总手", "73092", false], ["金额", "3019万", false],
];
const PERIODS = ["分时", "五日", "日K", "周K", "月K"];
const SECTIONS = ["股吧", "盘口", "资讯", "公告", "研报", "财务", "资料"];

export default function App() {
  return (
    <>
      <GlobalStyle />
      <Screen>
        <StatusBar>
          <span>10:02</span>
          <AppIcons>
            <svg width="36" height="36" viewBox="0 0 36 36">
              <defs>
                <linearGradient id="blue" x2="1" y2="1"><stop stopColor="#18aefc" /><stop offset="1" stopColor="#0a5cf5" /></linearGradient>
              </defs>
              <rect width="36" height="36" rx="9" fill="url(#blue)" />
              <path d="M13 8h10M10.500 11h15" stroke="#8fc9ff" strokeWidth="2.500" />
              <rect x="7" y="13" width="22" height="16" rx="3" fill="#eaf5ff" />
            </svg>
            <svg width="36" height="36" viewBox="0 0 36 36" fill="none" strokeWidth="4">
              <rect width="36" height="36" rx="9" fill="#0b0b16" />
              <path d="M18 15.500a6 6 0 1 0 4 6V8c1 4 4 6 7 6" stroke="#fe2c55" transform="translate(0 1)" />
              <path d="M16 14a6 6 0 1 0 4 6V6c1 4 4 6 7 6" stroke="#25f4ee" />
              <path d="M17 15a6 6 0 1 0 4 6V7c1 4 4 6 7 6" stroke="#fff" strokeWidth="3.500" />
            </svg>
            <svg width="36" height="36" viewBox="0 0 36 36">
              <rect width="36" height="36" rx="9" fill="#f7f8fa" />
              <circle cx="18" cy="18" r="12" fill="#4a9ffb" />
              <path d="M30 17A12 12 0 0 1 9 27C18 26 26 21 30 13Z" fill="#1d6ee8" />
              <path d="M6 28C3 31 5 20 17 11S32 5 29 9C25 17 12 27 6 28Z" fill="#8fd0ff" opacity=".7" />
            </svg>
            <svg width="36" height="36" viewBox="0 0 36 36" fill="none" strokeWidth="2">
              <path d="M9 17v8a3 3 0 0 0 3 3h14a3 3 0 0 0 3-3v-8" stroke="#178fc4" />
              <path d="M6 14l8-7h6l11 9" stroke="#178fc4" strokeWidth="2.500" />
              <path d="M8 16l8-6 4 1 9 6" stroke="#8cc63f" strokeWidth="3" />
              <text x="13" y="25" fontSize="10" fontWeight="700" fill="#178fc4">AI</text>
            </svg>
            <svg width="36" height="36" viewBox="0 0 36 36" fill="none" stroke="#fff" strokeWidth="2.500">
              <rect width="36" height="36" rx="9" fill="#ff4906" stroke="none" />
              <circle cx="14.500" cy="11.500" r="4" /><circle cx="23.500" cy="11.500" r="4.500" />
              <rect x="14" y="19" width="14" height="10" rx="3" />
              <path d="M14 23l-6-3v8l6-3" />
            </svg>
          </AppIcons>
          <svg width="52" height="12" viewBox="0 0 52 12"><circle cx="41" cy="6" r="6" /></svg>
          <SystemIcons>
            <svg width="44" height="34" viewBox="0 0 44 34" fill="none" stroke="#222" strokeWidth="5">
              <path d="M2 11a27 27 0 0 1 38 0M8 18a19 19 0 0 1 26 0M14 24a11 11 0 0 1 13 0" />
              <circle cx="20.500" cy="30" r="3.500" fill="#222" stroke="none" />
              <path d="M34 26l5-5 5 5zM34 29l5 5 5-5z" fill="#222" stroke="none" />
            </svg>
            <HdBadge>HD<HdDigits><span>1</span><span>2</span></HdDigits></HdBadge>
            <Signal label="5G" />
            <Signal label="4G" weak />
            <svg width="68" height="30" viewBox="0 0 68 30">
              <rect x="1" y="1" width="61" height="28" rx="7" fill="none" stroke="#222" strokeWidth="2" />
              <rect x="5" y="5" width="42" height="20" rx="3" fill="#222" />
              <rect x="64" y="10" width="3" height="10" rx="1.500" fill="#222" />
            </svg>
          </SystemIcons>
        </StatusBar>

        <Header>
          <HeaderSide>
            <IconButton aria-label="返回">
              <Stroke size={[33, 56]} d="M30 2L4 28 30 54" color="#333" width={6} />
            </IconButton>
            <BrandLogo href="#home"><span>东方</span><span>财富</span></BrandLogo>
          </HeaderSide>
          <div>
            <Title>*ST宁科</Title>
            <Code>600165<Level>L1</Level><Caret $w={22} $color="#ccc" /></Code>
          </div>
          <HeaderSide $end>
            <AiButton>Ai</AiButton>
            <IconButton aria-label="分享">
              <Stroke size={[60, 62]} d="M26 4H9a5 5 0 0 0-5 5v45a5 5 0 0 0 5 5h43a5 5 0 0 0 5-5V32M29 35L57 5M36 4H57V22" color="#333" />
            </IconButton>
            <IconButton aria-label="搜索">
              <svg width="62" height="62" viewBox="0 0 62 62" fill="none" stroke="#333" strokeWidth="4">
                <circle cx="31" cy="29" r="26" /><path d="M48 47l12 13" strokeWidth="5" />
              </svg>
            </IconButton>
          </HeaderSide>
        </Header>

        <Quote>
          <QuoteTop>
            <PriceBlock>
              <Price>4.13</Price>
              <Change><span>5.09%</span><span>0.20</span></Change>
            </PriceBlock>
            <Stats>
              {STATS.map(([name, value, up]) => (
                <Stat key={name}><StatName>{name}</StatName><StatValue $up={up}>{value}</StatValue></Stat>
              ))}
            </Stats>
          </QuoteTop>
          <QuoteBottom>
            <QuoteDate>2025/09/19</QuoteDate>
            <MoreButton>更多</MoreButton>
          </QuoteBottom>
        </Quote>

        <News>
          <svg width="45" height="36" viewBox="0 0 45 36" fill="#ff5500">
            <path d="M4 9h9L22 1q3-2 3 2v30q0 4-3 2l-9-8H4q-4 0-4-4V13q0-4 4-4z" />
            <path d="M30 9q6 9 0 18M36 4q9 14 0 28" fill="none" stroke="#ff6a1a" strokeWidth="3.500" />
          </svg>
          <NewsText href="#news">三季报预披露：于2025-10-31披露2025年三季报</NewsText>
          <Dot />
          <IconButton aria-label="关闭">
            <Stroke size={[30, 30]} d="M1 1l28 28M29 1L1 29" color="#999" width={3} />
          </IconButton>
        </News>

        <Tabs $pad="0 35px 0 0" $height={104}>
          {PERIODS.map((p) => <Tab key={p} $active={p === "日K"}>{p}</Tab>)}
          <Tab>更多<Caret /></Tab>
          <GearButton aria-label="设置">
            <svg width="54" height="54" viewBox="0 0 54 54" fill="none" stroke="#666" strokeWidth="4" strokeLinejoin="round">
              <path d="M22 3h10l3 7 5 3 7-1 4 9-4 6 4 6-4 9-7-1-5 3-3 7H22l-3-7-5-3-7 1-4-9 4-6-4-6 4-9 7 1 5-3z" />
              <circle cx="27" cy="27" r="9" />
            </svg>
          </GearButton>
        </Tabs>

        <MaBar>
          <Picker $w={108}>
            <PickerSelect aria-label="指标"><option>均线</option></PickerSelect>
            <Caret />
          </Picker>
          <MaGrid>
            <Reading $color="#262626">MA5:4.00<Arrow /></Reading>
            <Reading $color="#f4bd46">10:3.86<Arrow /></Reading>
            <Reading $color="#c3157a">20:3.92<Arrow down /></Reading>
            <Reading $color="#0a960a">30:3.99<Arrow /></Reading>
            <Reading $color="#666">60:4.19<Arrow down /></Reading>
          </MaGrid>
          <Chips>
            <ChipButton>DK点<Corner /></ChipButton>
            <ChipButton>前复权</ChipButton>
          </Chips>
        </MaBar>

        <ChartArea>
          <EventRow href="#event">
            <span>2025-09-19 ST宁科 → *ST宁科，实行退市风险警示,实行其他...</span>
            <Stroke size={[16, 28]} d="M2 2l11 12L2 26" color="#262626" />
          </EventRow>
          <PricePane>
            <Watermark>东方财富</Watermark>
            <PriceChart />
            <AxisLabel $y={57}>4.55</AxisLabel>
            <AxisLabel $y={207}>4.20</AxisLabel>
            <AxisLabel $y={357}>3.86</AxisLabel>
            <AxisLabel $y={503}>3.51</AxisLabel>
            <CursorLabel>4.67</CursorLabel>
            <PaneControls>
              <RoundButton aria-label="最早">
                <Stroke size={[30, 32]} d="M17 1L2 16 17 31M28 1L13 16 28 31" color="#dd5d17" width={3} />
              </RoundButton>
              <RoundButton aria-label="缩小"><Stroke size={[34, 34]} d="M0 17H34" color="#dd5d17" width={3} /></RoundButton>
              <RoundButton aria-label="放大"><Stroke size={[34, 34]} d="M0 17H34M17 0V34" color="#dd5d17" width={3} /></RoundButton>
              <RoundButton aria-label="前移"><Stroke size={[20, 32]} d="M18 1L3 16 18 31" color="#dd5d17" width={3} /></RoundButton>
              <RoundButton aria-label="后移" $muted><Stroke size={[20, 32]} d="M2 1L17 16 2 31" color="#777" width={3} /></RoundButton>
              <RoundButton aria-label="全屏">
                <Stroke size={[34, 34]} d="M2 15V2H15M2 2L13 14M32 19V32H19M32 32L20 20" color="#ea5504" width={3} />
              </RoundButton>
            </PaneControls>
            <Marker $x={54} />
            <Marker $x={80} />
            <LowLabel>3.51-&gt;</LowLabel>
          </PricePane>
          <VolumeBar>
            <Picker $w={152}>
              <PickerSelect aria-label="副图"><option>成交量</option></PickerSelect>
              <Caret $w={16} />
            </Picker>
            <VolumeReadings>
              <Reading $gap={10} $color="#262626">73092<Arrow down /></Reading>
              <Reading $gap={10} $color="#f0c020">MA1:13.59万<Arrow /></Reading>
              <Reading $gap={10} $color="#cf2fd0">MA2:11.48万<Arrow down /></Reading>
              <Reading $gap={10} $color="#0a960a">MA3:12.32万<Arrow down /></Reading>
            </VolumeReadings>
            <DrawerButton aria-label="展开"><Stroke size={[16, 28]} d="M14 2L3 14 14 26" color="#fff" /></DrawerButton>
          </VolumeBar>
          <VolumePane>
            <VolumeChart />
            <VolumeMax>21.92万</VolumeMax>
          </VolumePane>
          <TimeAxis>
            <Ticks />
            <Dates><span>20250612</span><span>20250721</span></Dates>
            <DateButton>20250919 周五 查看分时 &gt;</DateButton>
          </TimeAxis>
          <CrossLine />
        </ChartArea>

        <Promo>
          <svg width="47" height="40" viewBox="0 0 47 40" fill={ORANGE}>
            <path d="M0 12h4v16H0zM9 13L42 2V0h4v40h-4v-4l-16-4-2 5-8-3v-4l-7-2z" />
          </svg>
          <PromoText href="#promo">看准了？别让本金限制你的想象力！融资通道<Fade>&gt;&gt;</Fade></PromoText>
          <Divider />
          <IconButton aria-label="关闭广告">
            <Stroke size={[33, 33]} d="M1 1l31 31M32 1L1 32" color={ORANGE} width={3} />
          </IconButton>
        </Promo>

        <Rule />
        <Tabs $pad="0 29px 0 27px" $height={104}>
          {SECTIONS.map((s) => <Tab key={s} $active={s === "股吧"}>{s}</Tab>)}
        </Tabs>

        <Cards>
          <Card>
            <CardArt width="256" height="220" viewBox="0 0 256 220">
              <path d="M46 0h210v220H0V32h46z" fill="#fdefed" />
              <path d="M98 24h122l8 196H32V84h60z" fill="#fff5f3" />
              <path d="M118 55h78l5 165h-86zM68 104h36v120H68z" fill="#fbe6e4" />
              <path d="M135 115l36-14v119h-20v-92l-18 3z" fill="#fff5f3" />
            </CardArt>
            <CardHead>
              <svg width="48" height="48" viewBox="0 0 48 48">
                <defs>
                  <linearGradient id="rose" x2="0" y2="1"><stop stopColor="#d9504c" /><stop offset="1" stopColor="#f2a5a0" /></linearGradient>
                </defs>
                <circle cx="24" cy="24" r="24" fill="url(#rose)" />
                <path d="M10 21h5v16H9zM18 13h12l1 24H17zM33 25h5l1 12h-6z" fill="#fff" />
                <text x="20.500" y="29" fontSize="12" fontWeight="700" fill="#df6a66">1</text>
              </svg>
              人气榜
              <Stroke size={[16, 26]} d="M2 2l11 11L2 24" color="#aaa" width={3} />
            </CardHead>
            <CardNote>市场排名第</CardNote>
          </Card>
          <Card>
            <CardArt width="242" height="220" viewBox="0 0 242 220">
              <path d="M0 0h242v220H12z" fill="#fdefed" />
              <path d="M46 22h40l8 90 18-90h40l-30 198H62z" fill="#fff5f3" opacity=".8" />
              <path d="M66 44h28l6 70 24-70h24l-40 176H76z" fill="#fbe6e4" />
              <path d="M226 72q-16-26-44-18-26 12-14 40 6 14 24 30 10 14-4 30" fill="none" stroke="#fbe6e4" strokeWidth="24" />
            </CardArt>
            <CardHead>
              <svg width="48" height="48" viewBox="0 0 48 48">
                <circle cx="24" cy="24" r="24" fill="url(#rose)" />
                <text x="24" y="33" fontSize="25" fontWeight="900" fontStyle="italic" fill="#fff" textAnchor="middle">VS</text>
              </svg>
              多空看盘
            </CardHead>
            <CardPanel />
          </Card>
        </Cards>

        <BottomBar>
          <IndexBlock>
            <UpTick />
            <IndexValue>3907.74</IndexValue>
            <IndexRow><IndexName>上证</IndexName><span>-0.22%</span></IndexRow>
          </IndexBlock>
          <Actions>
            <Action>
              <svg width="66" height="60" viewBox="0 0 66 60" fill="none" stroke="#666" strokeWidth="3">
                <path d="M18 8A27 27 0 0 1 58 42M64 38l-8 6 1-9M49 53A27 27 0 0 1 10 17M2 20l8-4-1 9" />
                <path d="M23 17l10 10 10-10M23 28h20M23 38h20M33 27v20" />
              </svg>
              交易
            </Action>
            <Action>
              <svg width="60" height="60" viewBox="0 0 60 60" fill="none" stroke="#666" strokeWidth="3">
                <path d="M44 3H10a6 6 0 0 0-6 6v42a6 6 0 0 0 6 6h42a6 6 0 0 0 6-6V20" />
                <path d="M52 3l5 4-4 7-5-4zM46 13l5 4-22 21-7 3 3-7z" fill="#666" stroke="none" />
              </svg>
              发帖
            </Action>
            <Action $small>
              <svg width="60" height="60" viewBox="0 0 60 60" fill="none" stroke="#666" strokeWidth="3">
                <rect x="6" y="5" width="22" height="23" rx="4" /><rect x="6" y="34" width="22" height="23" rx="4" />
                <rect x="34" y="34" width="22" height="23" rx="4" />
                <path d="M43 5q2-2 4 0l10 11q2 2 0 4L47 30q-2 2-4 0L34 20q-2-2 0-4z" />
              </svg>
              功能
            </Action>
            <Action>
              <svg width="60" height="60" viewBox="0 0 60 60">
                <circle cx="30" cy="30" r="27" fill="none" stroke="#666" strokeWidth="3" />
                <circle cx="18" cy="30" r="3" fill="#666" /><circle cx="30" cy="30" r="3" fill="#666" /><circle cx="42" cy="30" r="3" fill="#666" />
              </svg>
              设自选
            </Action>
          </Actions>
        </BottomBar>

        <SystemNav>
          <IconButton aria-label="最近任务"><Stroke size={[36, 38]} d="M0 2H36M0 19H36M0 36H36" color="#999" width={3} /></IconButton>
          <IconButton aria-label="主屏幕">
            <svg width="36" height="38" viewBox="0 0 36 38"><rect x="1.500" y="1.500" width="33" height="34" rx="8" fill="none" stroke="#999" strokeWidth="3" /></svg>
          </IconButton>
          <IconButton aria-label="后退">
            <Stroke size={[36, 38]} d="M34 5v28q0 4-4 2L4 22q-3-2 0-4L30 3q4-2 4 2z" color="#999" width={3} />
          </IconButton>
        </SystemNav>
        <Ink />
      </Screen>
    </>
  );
}
